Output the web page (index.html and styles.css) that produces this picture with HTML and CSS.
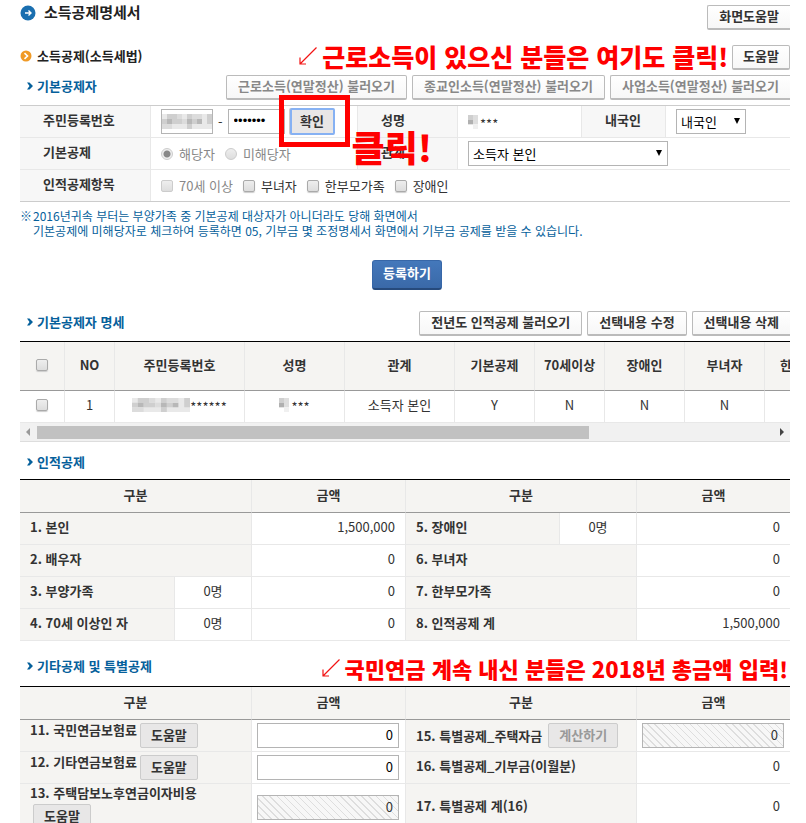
FILE: index.html
```html
<!DOCTYPE html>
<html lang="ko">
<head>
<meta charset="utf-8">
<title>소득공제명세서</title>
<link rel="stylesheet" href="styles.css">
</head>
<body>
<svg class="defs" aria-hidden="true">
  <symbol id="chev" viewBox="0 0 6 8"><path d="M0 .5h2.500L6 4 2.500 7.500H0L2.500 4z" fill="#05609b"/></symbol>
  <symbol id="arrow" viewBox="0 0 18 18"><path d="M17.500 .5L1.500 16.500M1 10.500V17h6" fill="none" stroke="#f21414" stroke-width="1.200"/></symbol>
  <symbol id="mosaic" viewBox="0 0 10 3" preserveAspectRatio="none">
    <path fill="#e9e9e9" d="M0 0h10v3H0z"/>
    <path fill="#cfcfcf" d="M0 1h1v1H0zM1 0h2v1H1zM2 1h2v1H2zM5 0h1v1H5zM6 1h1v1H6zM9 0h1v2H9zM5 2h1v1H5z"/>
    <path fill="#b8b8b8" d="M1 1h1v1H1zM5 1h1v1H5zM7 1h1v1H7z"/>
    <path fill="#dcdcdc" d="M3 0h1v1H3zM0 2h2v1H0zM6 0h2v1H6zM4 1h1v1H4z"/>
  </symbol>
  <symbol id="mosaic-name" viewBox="0 0 2 3" preserveAspectRatio="none">
    <path fill="#cfcfcf" d="M0 0h1v1H0z"/><path fill="#b0b0b0" d="M0 1h1v1H0z"/>
    <path fill="#dedede" d="M1 0h1v2H1z"/><path fill="#f0f0f0" d="M1 2h1v1H1z"/>
  </symbol>
</svg>
<main class="page">
  <header class="bar bar-title">
    <svg class="icon-title" viewBox="0 0 16 16" aria-hidden="true"><circle cx="8" cy="8" r="7.500" fill="#1a6fb0"/><path d="M5 8h6M8.500 5.500L11 8l-2.500 2.500" fill="none" stroke="#fff" stroke-width="1.400"/></svg>
    <h1>소득공제명세서</h1>
    <button type="button" class="btn btn-wide btn-edge push">화면도움말</button>
  </header>

  <div class="bar bar-law">
    <svg class="icon-law" viewBox="0 0 12 12" aria-hidden="true"><circle cx="6" cy="6" r="5.500" fill="#f09a26"/><path d="M4.500 3.200L7.500 6l-3 2.800" fill="none" stroke="#fff" stroke-width="1.600"/></svg>
    <h2>소득공제(소득세법)</h2>
    <p class="memo memo-top push"><svg viewBox="0 0 18 18" aria-hidden="true"><use href="#arrow"/></svg>근로소득이 있으신 분들은 여기도 클릭!</p>
    <button type="button" class="btn">도움말</button>
  </div>

  <section>
    <div class="bar bar-sub">
      <h3><svg aria-hidden="true"><use href="#chev"/></svg>기본공제자</h3>
      <div class="actions push">
        <button type="button" class="btn btn-wide btn-load">근로소득(연말정산) 불러오기</button>
        <button type="button" class="btn btn-wide btn-load">종교인소득(연말정산) 불러오기</button>
        <button type="button" class="btn btn-wide btn-load btn-edge">사업소득(연말정산) 불러오기</button>
      </div>
    </div>
    <table class="form">
      <colgroup><col class="f1"><col class="f2"><col class="f3"><col class="f4"><col class="f5"><col></colgroup>
      <tr>
        <th><label for="rrn1">주민등록번호</label></th>
        <td>
          <div class="rrn">
            <span class="masked"><input id="rrn1" type="text" class="field"><svg aria-hidden="true"><use href="#mosaic"/></svg></span>
            <span>-</span>
            <input type="password" class="field rrn2" value="0000000" aria-label="주민등록번호 뒷자리">
            <span class="target"><button type="button" class="btn btn-check">확인</button><strong class="memo memo-click">클릭!</strong></span>
          </div>
        </td>
        <th>성명</th>
        <td><span class="name"><svg aria-hidden="true"><use href="#mosaic-name"/></svg><span class="stars">***</span></span></td>
        <th><label for="nation">내국인</label></th>
        <td><span class="pick pick-nation"><select id="nation"><option>내국인</option><option>외국인</option></select></span></td>
      </tr>
      <tr>
        <th>기본공제</th>
        <td><div class="choices radios">
          <label class="off"><input type="radio" name="basic" checked disabled>해당자</label>
          <label class="off"><input type="radio" name="basic" disabled>미해당자</label>
        </div></td>
        <th><label for="relation">관계</label></th>
        <td colspan="3"><span class="pick pick-relation"><select id="relation"><option>소득자 본인</option></select></span></td>
      </tr>
      <tr>
        <th>인적공제항목</th>
        <td colspan="5"><div class="choices">
          <label class="off"><input type="checkbox" disabled>70세 이상</label>
          <label><input type="checkbox">부녀자</label>
          <label><input type="checkbox">한부모가족</label>
          <label><input type="checkbox">장애인</label>
        </div></td>
      </tr>
    </table>
    <p class="note"><span>※</span><span>2016년귀속 부터는 부양가족 중 기본공제 대상자가 아니더라도 당해 화면에서<br>기본공제에 미해당자로 체크하여 등록하면 05, 기부금 몇 조정명세서 화면에서 기부금 공제를 받을 수 있습니다.</span></p>
    <div class="submit"><button type="button" class="btn-main">등록하기</button></div>
  </section>

  <section>
    <div class="bar bar-list">
      <h3><svg aria-hidden="true"><use href="#chev"/></svg>기본공제자 명세</h3>
      <div class="actions push">
        <button type="button" class="btn btn-wide">전년도 인적공제 불러오기</button>
        <button type="button" class="btn btn-wide">선택내용 수정</button>
        <button type="button" class="btn btn-wide btn-edge">선택내용 삭제</button>
      </div>
    </div>
    <div class="scroller">
      <table class="list">
        <colgroup><col class="l1"><col class="l2"><col class="l3"><col class="l4"><col class="l5"><col class="l6"><col class="l7"><col class="l6"><col class="l6"><col></colgroup>
        <thead><tr>
          <th><input type="checkbox" aria-label="전체 선택"></th><th>NO</th><th>주민등록번호</th><th>성명</th><th>관계</th><th>기본공제</th><th>70세이상</th><th>장애인</th><th>부녀자</th><th>한부모가족</th>
        </tr></thead>
        <tbody><tr>
          <td><input type="checkbox" aria-label="1번 선택"></td><td>1</td>
          <td><span class="hidden-id"><svg aria-hidden="true"><use href="#mosaic"/></svg><span class="stars">******</span></span></td>
          <td><span class="name"><svg aria-hidden="true"><use href="#mosaic-name"/></svg><span class="stars">***</span></span></td>
          <td>소득자 본인</td><td>Y</td><td>N</td><td>N</td><td>N</td><td></td>
        </tr></tbody>
      </table>
    </div>
    <div class="scrollbar" aria-hidden="true"><i class="left"></i><div class="track"><div class="thumb"></div></div><i class="right"></i></div>
  </section>

  <section>
    <h3 class="head-personal"><svg aria-hidden="true"><use href="#chev"/></svg>인적공제</h3>
    <table class="sum">
      <colgroup><col class="w2"><col class="w1"><col class="w2"><col class="w2"><col class="w1"><col class="w2"></colgroup>
      <thead><tr><th colspan="2">구분</th><th>금액</th><th colspan="2">구분</th><th>금액</th></tr></thead>
      <tbody>
        <tr><th colspan="2">1. 본인</th><td>1,500,000</td><th>5. 장애인</th><td class="count">0명</td><td>0</td></tr>
        <tr><th colspan="2">2. 배우자</th><td>0</td><th colspan="2">6. 부녀자</th><td>0</td></tr>
        <tr><th>3. 부양가족</th><td class="count">0명</td><td>0</td><th colspan="2">7. 한부모가족</th><td>0</td></tr>
        <tr><th>4. 70세 이상인 자</th><td class="count">0명</td><td>0</td><th colspan="2">8. 인적공제 계</th><td>1,500,000</td></tr>
      </tbody>
    </table>
  </section>

  <section>
    <div class="bar bar-etc">
      <h3><svg aria-hidden="true"><use href="#chev"/></svg>기타공제 및 특별공제</h3>
      <p class="memo memo-bottom push"><svg viewBox="0 0 18 18" aria-hidden="true"><use href="#arrow"/></svg>국민연금 계속 내신 분들은 2018년 총금액 입력!</p>
    </div>
    <table class="sum etc">
      <colgroup><col class="w3"><col class="w2"><col class="w3"><col class="w2"></colgroup>
      <thead><tr><th>구분</th><th>금액</th><th>구분</th><th>금액</th></tr></thead>
      <tbody>
        <tr>
          <th class="with-button"><div class="item"><label for="a11">11. 국민연금보험료</label><button type="button" class="btn btn-flat">도움말</button></div></th>
          <td class="entry"><input id="a11" type="text" class="field" value="0"></td>
          <th class="with-button"><div class="item item-calc"><label for="a15">15. 특별공제_주택자금</label><button type="button" class="btn btn-flat" disabled>계산하기</button></div></th>
          <td class="entry"><input id="a15" type="text" class="field" value="0" readonly></td>
        </tr>
        <tr>
          <th class="with-button"><div class="item"><label for="a12">12. 기타연금보험료</label><button type="button" class="btn btn-flat">도움말</button></div></th>
          <td class="entry"><input id="a12" type="text" class="field" value="0"></td>
          <th>16. 특별공제_기부금(이월분)</th><td>0</td>
        </tr>
        <tr>
          <th class="with-button"><div class="item item-wrap"><label for="a13">13. 주택담보노후연금이자비용</label><button type="button" class="btn btn-flat">도움말</button></div></th>
          <td class="entry"><input id="a13" type="text" class="field" value="0" readonly></td>
          <th>17. 특별공제 계(16)</th><td>0</td>
        </tr>
      </tbody>
    </table>
  </section>
</main>
</body>
</html>
```
FILE: styles.css
```css
* { box-sizing: border-box; }

body {
  margin: 0;
  background: #fff;
  color: #333;
  font: 13px/16px "Noto Sans CJK KR", sans-serif;
}

.defs { position: absolute; width: 0; height: 0; }

.page {
  height: 100vh;
  overflow: hidden;
  padding: 5px 16px 0 20px;
}

h1, h2, h3, p { margin: 0; }
h1 { font-size: 15px; line-height: 14px; color: #222; margin-left: 8px; }
h2 { padding-bottom: 4px; font-size: 13px; color: #222; margin-left: 5px; white-space: nowrap; }
h3 {
  display: flex;
  align-items: center;
  gap: 4px;
  padding: 0 0 3px 7px;
  font-size: 13px;
  color: #05609b;
  white-space: nowrap;
}
h3 svg { width: 6px; height: 8px; }

.bar { display: flex; align-items: center; height: 25px; }
.bar-title { align-items: flex-start; }
.bar-law { margin-top: 15px; }
.bar-sub { margin-top: 5px; }
.bar-list { margin-top: 21px; }
.push { margin-left: auto; }
.icon-title { width: 16px; height: 16px; }
.icon-law { width: 12px; height: 12px; margin-bottom: 4px; }
.actions { display: flex; gap: 5px; }

.btn {
  height: 25px;
  flex: none;
  padding: 0 10px 2px;
  border: 1px solid #bbb;
  border-bottom-width: 2px;
  border-radius: 2px;
  background: linear-gradient(#fff, #f7f7f7);
  color: #333;
  font: bold 13px/16px "Noto Sans CJK KR", sans-serif;
  white-space: nowrap;
}
.btn-wide { padding: 0 11px 2px; }
.btn-load { color: #888; }
.btn-edge { border-right: 0; border-radius: 2px 0 0 2px; }
.btn-flat { border: 1px solid #ccc; background: #e8e7e7; }
.btn-flat:disabled { color: #999; }

.memo {
  display: flex;
  align-items: center;
  color: #f00;
  font-weight: 900;
  white-space: nowrap;
}
.memo svg { width: 18px; height: 18px; margin-right: 5px; }
.memo-top { font-size: 25px; line-height: 25px; margin-right: 4px; padding-bottom: 3px; }
.memo-bottom { font-size: 22px; line-height: 22px; margin-right: 2px; }

table { width: 100%; border-collapse: separate; border-spacing: 0; table-layout: fixed; }
th, td { padding: 0; }

.form { margin-top: 5px; border-top: 1px solid #ccc; border-bottom: 1px solid #ccc; }
.form th, .form td { height: 32px; border-bottom: 1px solid #e8e8e8; }
.form tr:last-child > * { height: 31px; border-bottom: 0; }
.form th { padding: 0 0 3px 23px; background: #f7f7f7; border-right: 1px solid #e8e8e8; text-align: left; }
.form td { padding-left: 10px; }
.form td + th { border-left: 1px solid #e8e8e8; }
.f1 { width: 131px; }
.f2 { width: 206px; }
.f3 { width: 101px; }
.f4 { width: 123px; }
.f5 { width: 85px; }

.field {
  display: block;
  width: 100%;
  height: 25px;
  padding: 0 5px 2px;
  border: 1px solid #b4b4b4;
  border-radius: 0;
  background: #fff;
  color: #000;
  font: 13px/16px "Noto Sans CJK KR", sans-serif;
}
.field[readonly] {
  color: #333;
  background: repeating-linear-gradient(45deg, #f7f7f7 0 4px, #dedede 4px 5px);
}

.rrn { display: flex; align-items: center; gap: 5px; }
.masked { position: relative; width: 52px; flex: none; }
.masked svg { position: absolute; left: 1px; top: 5px; width: 50px; height: 15px; }
.rrn2 { width: 57px; flex: none; font: 13px/16px "Liberation Sans", sans-serif; }
.target { position: relative; display: flex; }
.target::after {
  content: "";
  position: absolute;
  inset: -13px -15px -12px -11px;
  border: 5px solid #f00;
}
.btn-check {
  width: 45px;
  height: 27px;
  padding: 0 0 2px;
  border: 2px solid #86b1f3;
  background: #e8e6e6;
  box-shadow: -1px 0 #ccc;
}
.memo-click { position: absolute; left: 62px; top: 18px; z-index: 1; font-size: 36px; line-height: 40px; }

.name, .hidden-id { display: inline-flex; align-items: center; vertical-align: middle; }
.name svg { width: 10px; height: 14px; margin-right: 2px; }
.hidden-id svg { width: 58px; height: 14px; }
.stars { padding-top: 4px; }

.pick { position: relative; display: inline-block; vertical-align: middle; }
.pick select {
  appearance: none;
  display: block;
  width: 100%;
  height: 25px;
  padding: 0 4px;
  border: 1px solid #b4b4b4;
  border-radius: 0;
  background: #fff;
  color: #000;
  font: 13px/16px "Noto Sans CJK KR", sans-serif;
}
.pick::after {
  content: "";
  position: absolute;
  right: 6px;
  top: 9px;
  border: solid transparent;
  border-width: 6px 3px 0;
  border-top-color: #000;
}
.pick-nation { width: 70px; }
.pick-relation { width: 200px; }

.choices { display: flex; gap: 10px; }
.choices label { display: flex; align-items: center; gap: 6px; line-height: 14px; }
.choices .off { color: #888; }
input[type="checkbox"], input[type="radio"] {
  appearance: none;
  display: block;
  width: 12px;
  height: 12px;
  flex: none;
  margin: 0;
  border: 1px solid #aaa;
  border-radius: 2px;
  background: linear-gradient(#eee, #ddd);
  box-shadow: 0 1px 1px #ccc;
}
input[type="radio"] { border-radius: 50%; }
input:disabled { border-color: #ccc; box-shadow: none; }
input[type="radio"]:checked { background: radial-gradient(circle, #888 0 3px, #eee 4px); }

.note { display: flex; gap: 1px; margin-top: 6px; color: #05609b; font-size: 12px; line-height: 15px; }
.submit { display: flex; justify-content: center; margin-top: 22px; padding-left: 4px; }
.btn-main {
  width: 70px;
  height: 30px;
  padding: 0 0 3px;
  border: 1px solid #3767a8;
  border-bottom: 2px solid #264a7c;
  border-radius: 3px;
  background: linear-gradient(#4478bb, #3a69a8);
  color: #fff;
  font: bold 13px/16px "Noto Sans CJK KR", sans-serif;
}

.scroller { overflow: hidden; margin-top: 5px; border-top: 1px solid #000; }
.list { width: 836px; text-align: center; }
.list th { height: 49px; padding-bottom: 2px; background: #f5f4f2; border-bottom: 1px solid #999; }
.list td { height: 32px; padding-bottom: 3px; border-bottom: 1px solid #e8e8e8; }
.list th, .list td { border-right: 1px solid #e8e8e8; }
.list input { margin: 0 auto; }
.l1 { width: 45px; }
.l2 { width: 50px; }
.l3 { width: 130px; }
.l4 { width: 100px; }
.l5 { width: 110px; }
.l6 { width: 80px; }
.l7 { width: 70px; }

.scrollbar { display: flex; align-items: center; height: 19px; padding: 0 6px; background: #f1f1f1; border-bottom: 1px solid #ddd; }
.scrollbar i { border: 4px solid transparent; }
.scrollbar .left { border-left-width: 0; border-right-color: #999; }
.scrollbar .right { border-right-width: 0; border-left-color: #444; }
.track { flex: 1; margin: 0 7px; }
.thumb { width: 75%; height: 13px; background: #c1c1c1; }

.head-personal { height: 37px; padding-top: 6px; }
.sum { border-top: 1px solid #000; }
.sum th, .sum td { height: 32px; border-bottom: 1px solid #e8e8e8; }
.sum tr > * + * { border-left: 1px solid #e8e8e8; }
.sum th { background: #f5f4f2; }
.sum thead th { height: 33px; padding-bottom: 2px; border-bottom-color: #999; }
.sum tbody th { padding: 0 0 4px 10px; text-align: left; }
.sum td { padding: 0 10px 4px 0; text-align: right; }
.sum .count { padding: 0 0 4px; text-align: center; }
.w1 { width: 10%; }
.w2 { width: 20%; }
.w3 { width: 30%; }

.bar-etc { height: 45px; padding-top: 8px; }
.sum .entry { padding: 0 6px 0 5px; }
.entry .field { text-align: right; }
.sum tbody .with-button { padding-bottom: 0; }
.item { display: flex; gap: 3px; }
.item label { line-height: 14px; }
.item-calc { align-items: center; gap: 6px; }
.item-wrap { flex-wrap: wrap; row-gap: 4px; }
.item-wrap .btn { margin-left: 3px; }
.etc tbody tr:last-child th { height: 48px; }
```
